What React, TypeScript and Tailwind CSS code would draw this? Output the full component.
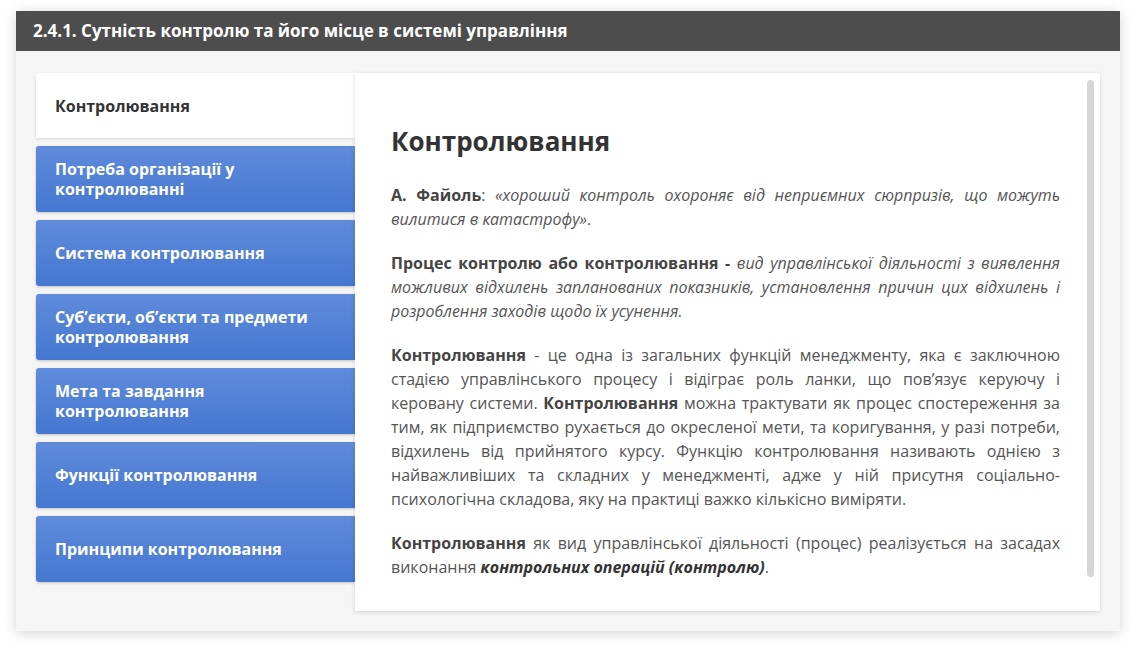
const tabs = [
  'Потреба організації у контролюванні',
  'Система контролювання',
  'Субʼєкти, обʼєкти та предмети контролювання',
  'Мета та завдання контролювання',
  'Функції контролювання',
  'Принципи контролювання',
];

export default function App() {
  return (
    <div className="w-full h-[653px] bg-white pt-[11px] pl-[16px] font-['Open_Sans',sans-serif]">
      <div className="w-[1104px] h-[620px] flex flex-col bg-[#f5f5f5] shadow-[0_2px_12px_rgba(0,0,0,0.18)]">
        {/* Title bar */}
        <div className="h-[40px] bg-[#4d4d4d] px-[17px] flex items-center text-white font-bold text-[17px]">
          2.4.1. Сутність контролю та його місце в системі управління
        </div>

        <div className="flex-1 px-[20px] pt-[22px]">
          <div className="flex h-[538px]">
            {/* Left tabs */}
            <div className="w-[319px] flex flex-col gap-[8px]">
              <div className="h-[65px] bg-white rounded-tl-[3px] flex items-center pl-[19px] text-[16px] font-bold text-[#333] shadow-[0_1px_3px_rgba(0,0,0,0.12)]">
                Контролювання
              </div>
              {tabs.map((t) => (
                <div
                  key={t}
                  className="h-[66px] rounded-l-[3px] bg-gradient-to-b from-[#5f8bda] to-[#4577d1] flex items-center pl-[19px] pr-[30px] text-white font-bold text-[16px] leading-[20px] shadow-[0_1px_3px_rgba(0,0,0,0.2)]"
                >
                  {t}
                </div>
              ))}
            </div>

            {/* Content panel */}
            <div className="relative w-[745px] h-[538px] bg-white rounded-r-[3px] shadow-[0_1px_4px_rgba(0,0,0,0.15)] overflow-hidden">
              <div className="pl-[36px] pr-[40px] pt-[50px] text-[16px] leading-[24px] text-[#555] text-justify">
                <h2 className="text-[26px] leading-[36px] font-bold text-[#333] mb-[24px] text-left">
                  Контролювання
                </h2>
                <p className="mb-[20px]">
                  <b className="text-[#444]">А. Файоль</b>:{' '}
                  <i>«хороший контроль охороняє від неприємних сюрпризів, що можуть вилитися в катастрофу»</i>.
                </p>
                <p className="mb-[20px]">
                  <b className="text-[#444]">Процес контролю або контролювання -</b>{' '}
                  <i>
                    вид управлінської діяльності з виявлення можливих відхилень запланованих показників, установлення
                    причин цих відхилень і розроблення заходів щодо їх усунення.
                  </i>
                </p>
                <p className="mb-[20px]">
                  <b className="text-[#444]">Контролювання</b> - це одна із загальних функцій менеджменту, яка є
                  заключною стадією управлінського процесу і відіграє роль ланки, що пов’язує керуючу і керовану
                  системи. <b className="text-[#444]">Контролювання</b> можна трактувати як процес спостереження за
                  тим, як підприємство рухається до окресленої мети, та коригування, у разі потреби, відхилень від
                  прийнятого курсу. Функцію контролювання називають однією з найважливіших та складних у менеджменті,
                  адже у ній присутня соціально-психологічна складова, яку на практиці важко кількісно виміряти.
                </p>
                <p>
                  <b className="text-[#444]">Контролювання</b> як вид управлінської діяльності (процес) реалізується
                  на засадах виконання <b className="text-[#333]"><i>контрольних операцій (контролю)</i></b>.
                </p>
              </div>
              {/* scrollbar thumb */}
              <div className="absolute right-[6px] top-[7px] w-[7px] h-[497px] rounded-full bg-[#d6d6d6]" />
            </div>
          </div>
        </div>
      </div>
    </div>
  );
}
